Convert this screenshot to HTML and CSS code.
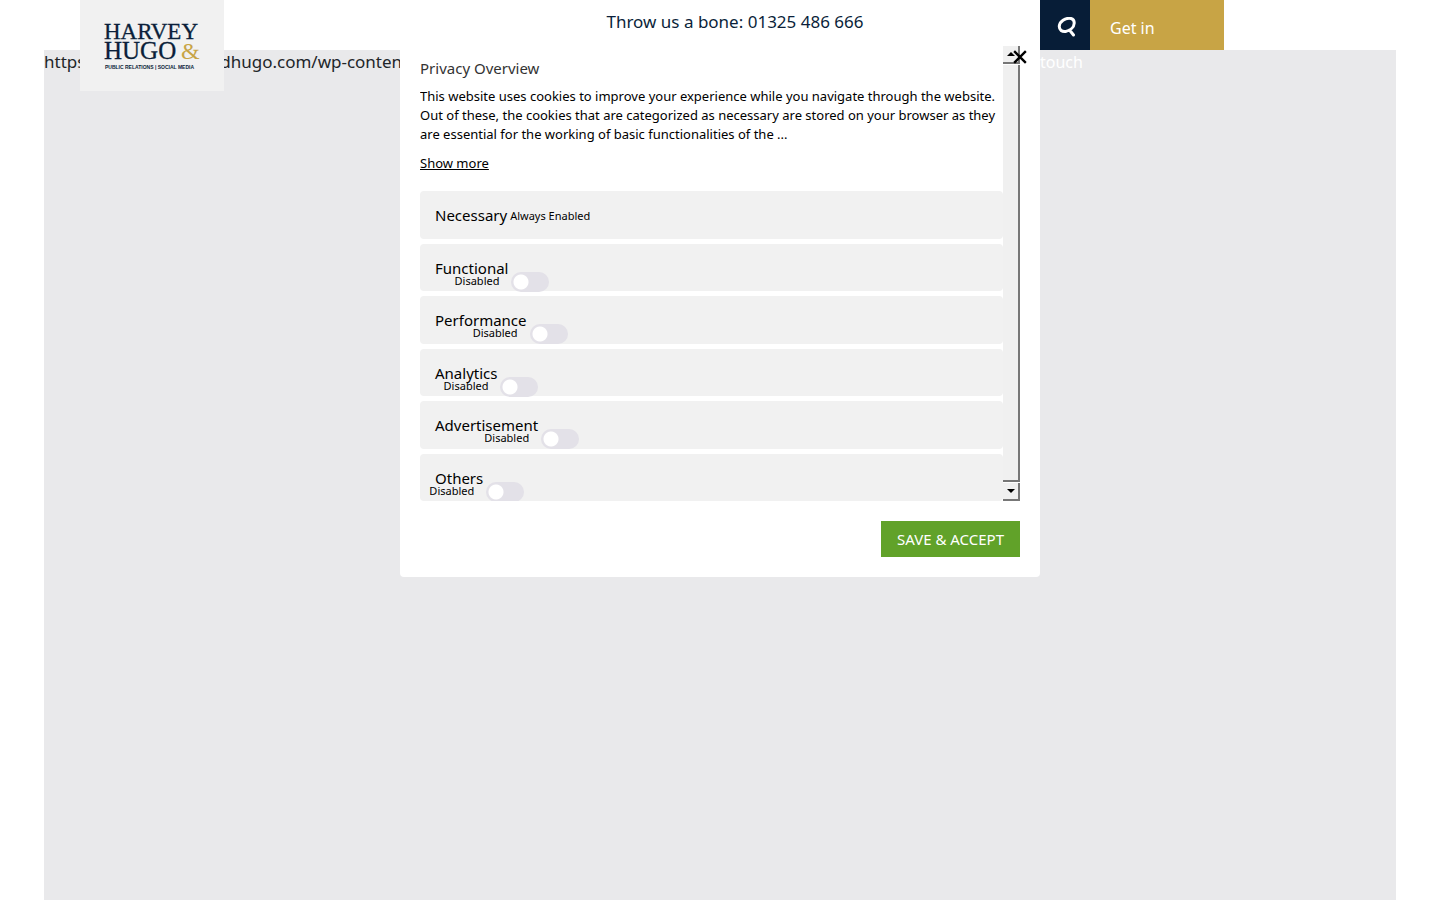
FILE: index.html
```html
<!DOCTYPE html>
<html lang="en">
<head>
<meta charset="utf-8">
<title>Harvey &amp; Hugo</title>
<link rel="stylesheet" href="styles.css">
</head>
<body>
<header class="header">
  <a class="logo" href="#">
    <svg viewBox="0 0 144 91" role="img" aria-label="Harvey &amp; Hugo">
      <text class="logo-name" x="24" y="39">HARVEY</text>
      <text class="logo-name logo-second" x="24" y="59">HUGO</text>
      <text class="logo-amp" x="101" y="59">&amp;</text>
      <text class="logo-tag" x="25" y="69">PUBLIC RELATIONS | SOCIAL MEDIA</text>
    </svg>
  </a>
  <p class="phone">Throw us a bone: <span class="number">01325 486 666</span></p>
  <nav class="actions">
    <button class="search" aria-label="Search">
      <svg viewBox="0 0 20 20"><path d="M14 1.5C8 .5 2.7 4.5 2.3 9C2 13 5.2 15 9 14.4C13 13.4 17 10.4 17.2 6.2C17.3 4 16 2 14 1.5M12.5 13L16.5 18"/></svg>
    </button>
    <a class="contact" href="#">Get in <span class="contact-wrap">touch</span></a>
  </nav>
</header>
<main class="page">https://www.harveyandhugo.com/wp-content</main>

<section class="modal" role="dialog" aria-label="Privacy Overview">
  <button class="close" aria-label="Close"><svg viewBox="0 0 12 12"><path d="M1 1L11 11M11 1L1 11"/></svg></button>
  <div class="scroller">
    <div class="content">
      <h4 class="title">Privacy Overview</h4>
      <p class="copy">This website uses cookies to improve your experience while you navigate through the website.<br>Out of these, the cookies that are categorized as necessary are stored on your browser as they<br>are essential for the working of basic functionalities of the ...</p>
      <a class="more" href="#">Show more</a>
      <div class="rows">
        <div class="row"><span class="name">Necessary</span><span class="always">Always Enabled</span></div>
        <div class="row"><span class="name">Functional</span><label class="toggle"><span class="state">Disabled</span><input type="checkbox" aria-label="Functional"></label></div>
        <div class="row"><span class="name">Performance</span><label class="toggle"><span class="state">Disabled</span><input type="checkbox" aria-label="Performance"></label></div>
        <div class="row"><span class="name">Analytics</span><label class="toggle"><span class="state">Disabled</span><input type="checkbox" aria-label="Analytics"></label></div>
        <div class="row"><span class="name">Advertisement</span><label class="toggle"><span class="state">Disabled</span><input type="checkbox" aria-label="Advertisement"></label></div>
        <div class="row"><span class="name">Others</span><label class="toggle"><span class="state">Disabled</span><input type="checkbox" aria-label="Others"></label></div>
      </div>
    </div>
    <div class="scrollbar">
      <button class="arrow" aria-label="Scroll up"><svg viewBox="0 0 8 4"><path d="M0 4L4 0L8 4Z"/></svg></button>
      <div class="thumb"></div>
      <button class="arrow" aria-label="Scroll down"><svg viewBox="0 0 8 4"><path d="M0 0L4 4L8 0Z"/></svg></button>
    </div>
  </div>
  <div class="footer"><button class="save">SAVE &amp; ACCEPT</button></div>
</section>
</body>
</html>
```
FILE: styles.css
```css
* { box-sizing: border-box; }
body {
  margin: 0;
  min-height: 100vh;
  display: flex;
  flex-direction: column;
  background: #fff;
  color: #212529;
  font: 17px/24px "Noto Sans", sans-serif;
}
button { border: 0; padding: 0; font: inherit; cursor: pointer; }
svg { display: block; }

.header {
  height: 50px;
  display: grid;
  grid-template-columns: 350px 1fr 184px;
  grid-template-rows: 50px;
  padding: 0 216px 0 80px;
}
.logo { width: 144px; height: 91px; background: #f1f1f1; z-index: 1; }
.logo-name { font: 23px "Liberation Serif", serif; fill: #0b1f3a; stroke: #0b1f3a; stroke-width: 0.3; }
.logo-second { font-size: 25px; }
.logo-amp { font: 24px "Liberation Serif", serif; fill: #c8a445; }
.logo-tag { font: bold 5px "Liberation Sans", sans-serif; fill: #0b1f3a; }
.phone { margin: 0; padding-top: 10px; text-align: center; color: #0b1f3a; }
.actions { display: flex; z-index: 1; }
.search { width: 50px; padding: 3px 0 0 3px; background: #071d37; display: grid; place-items: center; }
.search svg { width: 20px; height: 20px; fill: none; stroke: #fff; stroke-width: 3; stroke-linecap: round; }
.contact {
  position: relative;
  flex: 1;
  padding: 16px 20px;
  background: #c8a445;
  color: #fff;
  font-size: 16px;
  text-decoration: none;
}
.contact-wrap { position: absolute; left: -50px; top: 50px; }
.page { flex: 1; margin: 0 44px; background: #e9e9eb; white-space: nowrap; }

.modal {
  position: absolute;
  z-index: 2;
  top: 46px;
  left: 50%;
  width: 640px;
  transform: translateX(-50%);
  padding: 0 20px 20px;
  border-radius: 4px;
  background: #fff;
  color: #000;
}
.close { position: absolute; right: 13px; top: 4px; z-index: 1; background: none; }
.close svg { width: 14px; height: 14px; fill: none; stroke: #000; stroke-width: 2; }
.scroller { display: flex; height: 455px; overflow: hidden; }
.content { flex: 1; min-width: 0; padding-top: 12px; }
.title { margin: 0 0 8px; font-weight: 400; font-size: 15px; line-height: 21px; color: #333; }
.copy { margin: 0 0 10px; font-size: 13px; line-height: 19px; white-space: nowrap; }
.more { display: block; width: max-content; font-size: 13px; line-height: 19px; color: #000; margin-bottom: 18px; }
.rows { display: grid; grid-auto-rows: 1fr; gap: 5px; height: 310px; }
.row { display: flex; padding: 14px 15px 0; gap: 3px; border-radius: 4px; background: #f1f1f1; min-height: 0; }
.name { font-size: 15px; line-height: 20px; }
.always { font-size: 11px; line-height: 22px; }
.toggle { position: relative; height: 20px; margin-top: 14px; }
.toggle input {
  display: block;
  appearance: none;
  width: 38px;
  height: 20px;
  margin: 0;
  border-radius: 10px;
  background: radial-gradient(circle at 10px 10px, #fff 7px, transparent 8px) #e3e1e8;
}
.state { position: absolute; right: 50px; top: 0; font-size: 11px; line-height: 18px; }

.scrollbar { width: 17px; display: flex; flex-direction: column; gap: 1px; background: #fff; }
.arrow, .thumb { background: #f0f0f0; border-right: 2px solid #777; border-bottom: 2px solid #777; }
.arrow { height: 18px; display: grid; place-items: center; }
.arrow svg { width: 8px; height: 4px; }
.thumb { flex: 1; }
.footer { display: flex; justify-content: flex-end; padding-top: 20px; }
.save { height: 36px; padding: 0 16px; background: #61a229; color: #fff; font-size: 15px; }
```
